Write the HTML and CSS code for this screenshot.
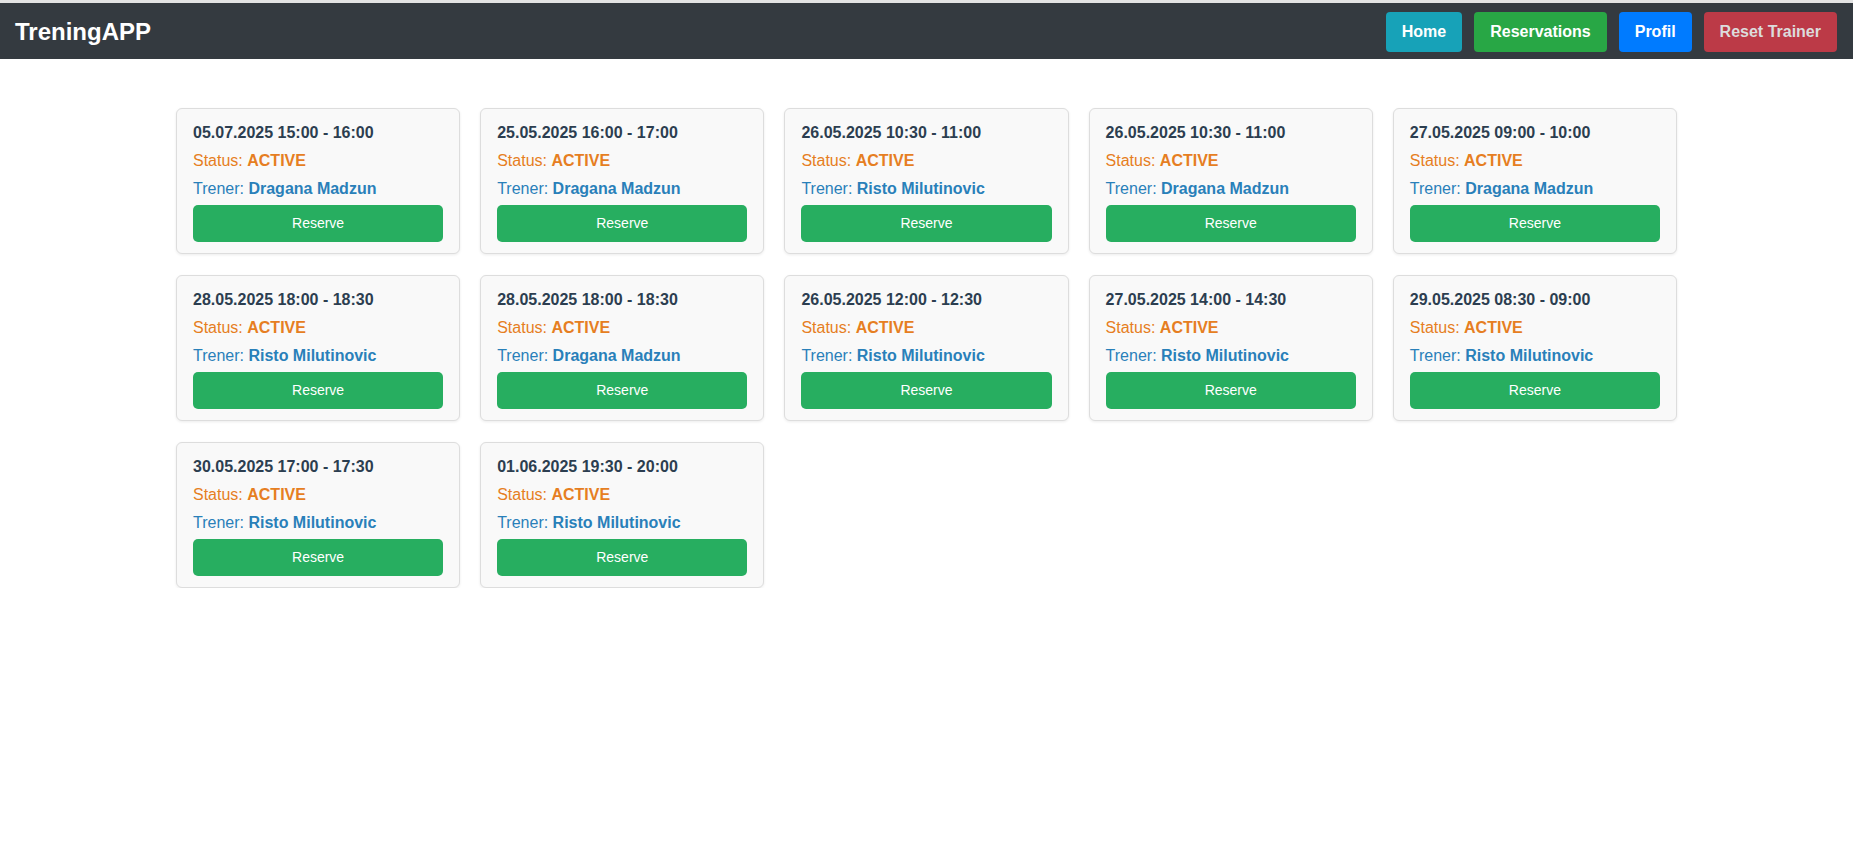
FILE: index.html
```html
<!DOCTYPE html>
<html lang="en">
<head>
<meta charset="utf-8">
<title>TreningAPP</title>
<link rel="stylesheet" href="styles.css">
</head>
<body>
<div class="topstrip"></div>
<nav class="navbar">
  <a class="brand" href="#">TreningAPP</a>
  <div class="nav-actions">
    <button class="nbtn nbtn-info">Home</button>
    <button class="nbtn nbtn-success">Reservations</button>
    <button class="nbtn nbtn-primary">Profil</button>
    <button class="nbtn nbtn-danger">Reset Trainer</button>
  </div>
</nav>
<main class="main">
  <div class="grid">
    <div class="card"><div class="c-title">05.07.2025 15:00 - 16:00</div><div class="c-status">Status: <b>ACTIVE</b></div><div class="c-trainer">Trener: <b>Dragana Madzun</b></div><button class="reserve">Reserve</button></div>
    <div class="card"><div class="c-title">25.05.2025 16:00 - 17:00</div><div class="c-status">Status: <b>ACTIVE</b></div><div class="c-trainer">Trener: <b>Dragana Madzun</b></div><button class="reserve">Reserve</button></div>
    <div class="card"><div class="c-title">26.05.2025 10:30 - 11:00</div><div class="c-status">Status: <b>ACTIVE</b></div><div class="c-trainer">Trener: <b>Risto Milutinovic</b></div><button class="reserve">Reserve</button></div>
    <div class="card"><div class="c-title">26.05.2025 10:30 - 11:00</div><div class="c-status">Status: <b>ACTIVE</b></div><div class="c-trainer">Trener: <b>Dragana Madzun</b></div><button class="reserve">Reserve</button></div>
    <div class="card"><div class="c-title">27.05.2025 09:00 - 10:00</div><div class="c-status">Status: <b>ACTIVE</b></div><div class="c-trainer">Trener: <b>Dragana Madzun</b></div><button class="reserve">Reserve</button></div>
    <div class="card"><div class="c-title">28.05.2025 18:00 - 18:30</div><div class="c-status">Status: <b>ACTIVE</b></div><div class="c-trainer">Trener: <b>Risto Milutinovic</b></div><button class="reserve">Reserve</button></div>
    <div class="card"><div class="c-title">28.05.2025 18:00 - 18:30</div><div class="c-status">Status: <b>ACTIVE</b></div><div class="c-trainer">Trener: <b>Dragana Madzun</b></div><button class="reserve">Reserve</button></div>
    <div class="card"><div class="c-title">26.05.2025 12:00 - 12:30</div><div class="c-status">Status: <b>ACTIVE</b></div><div class="c-trainer">Trener: <b>Risto Milutinovic</b></div><button class="reserve">Reserve</button></div>
    <div class="card"><div class="c-title">27.05.2025 14:00 - 14:30</div><div class="c-status">Status: <b>ACTIVE</b></div><div class="c-trainer">Trener: <b>Risto Milutinovic</b></div><button class="reserve">Reserve</button></div>
    <div class="card"><div class="c-title">29.05.2025 08:30 - 09:00</div><div class="c-status">Status: <b>ACTIVE</b></div><div class="c-trainer">Trener: <b>Risto Milutinovic</b></div><button class="reserve">Reserve</button></div>
    <div class="card"><div class="c-title">30.05.2025 17:00 - 17:30</div><div class="c-status">Status: <b>ACTIVE</b></div><div class="c-trainer">Trener: <b>Risto Milutinovic</b></div><button class="reserve">Reserve</button></div>
    <div class="card"><div class="c-title">01.06.2025 19:30 - 20:00</div><div class="c-status">Status: <b>ACTIVE</b></div><div class="c-trainer">Trener: <b>Risto Milutinovic</b></div><button class="reserve">Reserve</button></div>
  </div>
</main>
</body>
</html>
```
FILE: styles.css
```css
* { box-sizing: border-box; }

html, body {
  margin: 0;
  padding: 0;
  background: #ffffff;
  font-family: "Liberation Sans", Arial, Helvetica, sans-serif;
}

.topstrip {
  height: 3px;
  background: #e3e3e3;
}

.navbar {
  height: 56px;
  background: #343a40;
  display: flex;
  align-items: center;
  justify-content: space-between;
  padding: 1px 16px 0 15px;
}

.brand {
  color: #ffffff;
  font-size: 24px;
  font-weight: 700;
  text-decoration: none;
  line-height: 28px;
}

.nav-actions {
  display: flex;
  gap: 12px;
}

.nbtn {
  font-family: inherit;
  font-size: 16px;
  font-weight: 700;
  line-height: 24px;
  padding: 8px 16px;
  border: 0;
  border-radius: 4px;
  color: #ffffff;
  cursor: pointer;
}

.nbtn-info { background: #17a2b8; }
.nbtn-success { background: #28a745; }
.nbtn-primary { background: #007bff; }
.nbtn-danger { background: #bc3a47; color: #dcdcdc; }

.main {
  padding-top: 49px;
}

.grid {
  width: 1501px;
  margin: 0 auto;
  display: grid;
  grid-template-columns: repeat(5, 1fr);
  column-gap: 20px;
  row-gap: 21px;
}

.card {
  background: #f9f9f9;
  border: 1px solid #dddddd;
  border-radius: 6px;
  box-shadow: 0 1px 3px rgba(0, 0, 0, 0.08);
  padding: 15px 16px 11px;
  display: flex;
  flex-direction: column;
  font-size: 16px;
  line-height: 18px;
}

.c-title {
  color: #2c3e50;
  font-weight: 700;
  margin-bottom: 10px;
}

.c-status {
  color: #e67e22;
  margin-bottom: 10px;
}

.c-trainer {
  color: #2980b9;
}

.reserve {
  margin-top: 7px;
  font-family: inherit;
  font-size: 14px;
  line-height: 21px;
  padding: 8px 12px;
  border: 0;
  border-radius: 5px;
  background: #27ae60;
  color: #ffffff;
  cursor: pointer;
}
```
